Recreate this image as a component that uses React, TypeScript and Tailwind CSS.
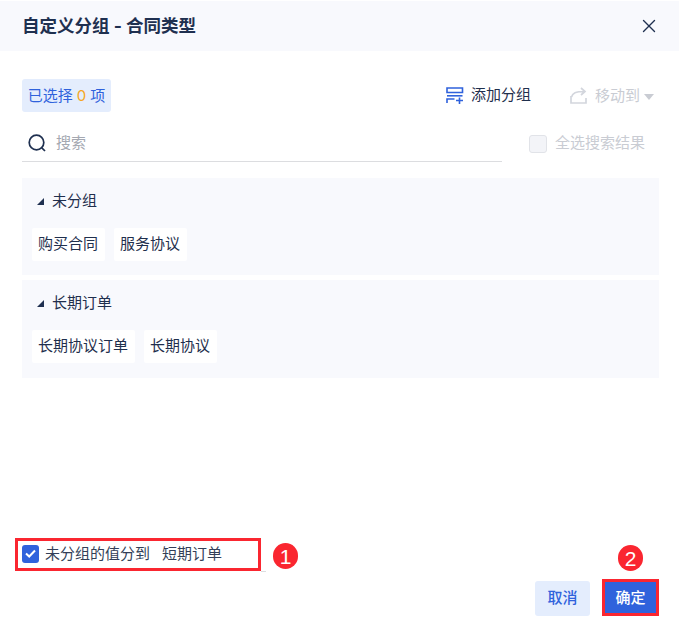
import { X } from 'lucide-react'

const groups = [
  { name: '未分组', tags: ['购买合同', '服务协议'] },
  { name: '长期订单', tags: ['长期协议订单', '长期协议'] },
]

const AddGroupIcon = () => (
  <svg width="18" height="17" viewBox="0 0 18 17" fill="none" stroke="#2f62dc" strokeWidth="1.6">
    <path d="M1 1h15.500v4.500H1z" />
    <path d="M1 8.800h15.500" />
    <path d="M1 16v-4h7.500M10 13.500h7M13.500 10.500V17" />
  </svg>
)

const MoveIcon = () => (
  <svg width="17" height="17" viewBox="0 0 17 17" fill="none" stroke="#d3d6dd" strokeWidth="1.7">
    <path d="M1 9v7h15v-5" />
    <path d="M1.500 10c1-4 4-5.500 13-5.500M11 1l4 3.500L11 8" />
  </svg>
)

const SearchIcon = () => (
  <svg width="18" height="18" viewBox="0 0 18 18" fill="none" stroke="#1f3050" strokeWidth="1.7">
    <circle cx="8.500" cy="8.500" r="7.300" />
    <path d="M13.800 13.800l3.200 3.200" />
  </svg>
)

const Annotation = ({ n }: { n: number }) => (
  <span className="flex h-[26px] w-[25px] items-center justify-center rounded-full bg-[#fa2630] font-['Liberation_Sans',sans-serif] text-[21px] leading-none text-white">
    {n}
  </span>
)

export default function App() {
  return (
    <div className="relative flex h-[622px] w-[679px] flex-col bg-white font-['Inter','Noto_Sans_CJK_SC',sans-serif] text-[15px] text-[#1f2f4d]">
      <header className="mt-px flex h-[50px] items-center justify-between bg-[#f8f9fd] pl-[22px] pr-[19px]">
        <h1 className="text-[17.5px] font-bold text-[#1f3050]">自定义分组 - 合同类型</h1>
        <X size={22} strokeWidth={1.5} className="text-[#1f3050]" />
      </header>

      <div className="flex items-center justify-between pl-[22px] pr-[25px] pt-[28px]">
        <div className="flex h-[33px] w-[89px] items-center justify-center gap-1 rounded-[3px] bg-[#e4edfd] pt-0.5 text-[#2f62dc]">
          <span>已选择</span>
          <span className="text-[#f6a623]">0</span>
          <span>项</span>
        </div>
        <div className="flex items-center">
          <AddGroupIcon />
          <span className="ml-[7px] mr-[39px]">添加分组</span>
          <MoveIcon />
          <span className="ml-2 mt-0.5 text-[#c9ccd3]">移动到</span>
          <span className="ml-1 mt-0.5 h-0 w-0 border-x-[5px] border-t-[6px] border-x-transparent border-t-[#c9ccd3]" />
        </div>
      </div>

      <div className="flex items-center justify-between pl-[22px] pr-[34px] pt-[13px]">
        <div className="flex h-[37px] w-[480px] items-center border-b border-[#dcdde0] pl-1.5">
          <SearchIcon />
          <span className="ml-[10px] text-[#a4a8b1]">搜索</span>
        </div>
        <div className="flex items-center text-[#c9ccd3]">
          <span className="h-[18px] w-[18px] rounded-[3px] border border-[#e1e3e8] bg-[#f3f4f8]" />
          <span className="ml-2">全选搜索结果</span>
        </div>
      </div>

      <div className="ml-[22px] mr-[20px] mt-4 flex flex-col gap-[5px]">
        {groups.map((group) => (
          <section key={group.name} className="h-[97px] bg-[#f8f9fd] pl-2.5 pt-3 last:h-[98px]">
            <div className="flex h-[22px] items-center pl-[5px]">
              <span className="h-0 w-0 border-b-[7px] border-l-[7px] border-b-[#1f3050] border-l-transparent" />
              <span className="ml-2">{group.name}</span>
            </div>
            <div className="mt-4 flex gap-[9px]">
              {group.tags.map((tag) => (
                <span key={tag} className="flex h-[33px] items-center rounded-[2px] bg-white pl-1.5 pr-[7px]">
                  {tag}
                </span>
              ))}
            </div>
          </section>
        ))}
      </div>

      <div className="mt-auto flex flex-col pb-[6px]">
        <label className="flex items-center pl-[22px] text-[#333f58]">
          <span className="flex h-[18px] w-[17px] items-center justify-center rounded-[3px] bg-[#2f62dc]">
            <svg width="13" height="13" viewBox="0 0 13 13" fill="none" stroke="white" strokeWidth="2">
              <path d="M2 6.500l3.200 3L11 3.500" />
            </svg>
          </span>
          <span className="ml-1.5">未分组的值分到</span>
          <span className="ml-3">短期订单</span>
        </label>
        <div className="mt-[16px] flex justify-end gap-[13px] pr-[21px]">
          <button className="h-[35px] w-[55px] rounded-[3px] bg-[#e4edfd] font-medium text-[#2f62dc]">取消</button>
          <button className="h-[35px] w-[55px] bg-[#2f62dc] font-medium text-white">确定</button>
        </div>
      </div>

      {/* red callouts drawn over the screenshot */}
      <div className="absolute left-[15px] top-[538px] h-[33px] w-[246px] border-[3px] border-[#fa2630]" />
      <div className="absolute left-[261px] top-[571px] h-px w-[5px] bg-[#dcdde0]" />
      <div className="absolute left-[273px] top-[543px]">
        <Annotation n={1} />
      </div>
      <div className="absolute left-[618px] top-[545px]">
        <Annotation n={2} />
      </div>
      <div className="absolute left-[602px] top-[579px] h-[37px] w-[57px] border-[3px] border-[#fa2630]" />
    </div>
  )
}
